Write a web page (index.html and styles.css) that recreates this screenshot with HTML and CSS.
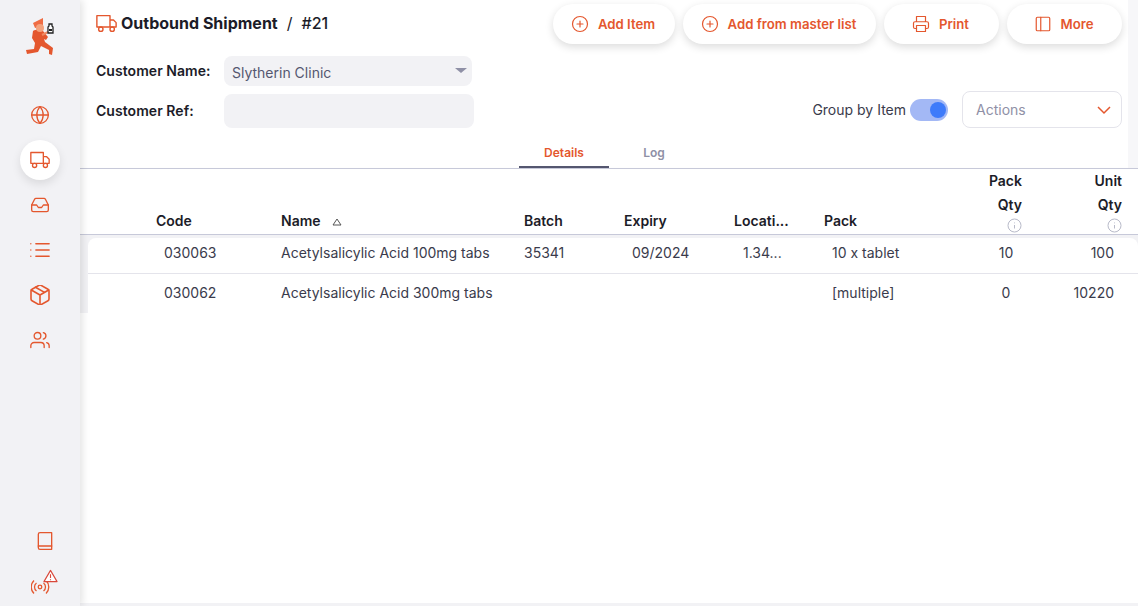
FILE: index.html
```html
<!DOCTYPE html>
<html lang="en">
<head>
    <meta charset="UTF-8">
    <meta name="viewport" content="width=device-width, initial-scale=1.0">
    <title>Outbound Shipment #21</title>
    <link rel="stylesheet" href="styles.css">
</head>
<body>
    <div class="app">
        <nav class="sidebar">
            <div class="logo">
                <svg width="30" height="40" viewBox="0 0 30 40">
                    <path d="M8 14c3-2 8-2 10 0l5 6-2 3-2-1 1 3 8 6-1 7-3-1 0-4-8-4-3 6-11 2-1-4 8-1 1-6-3-5z" fill="#e4572e"/>
                    <path d="M18 1L8 6l2 5 8-2z" fill="#ef6c43"/>
                    <circle cx="15" cy="11" r="4" fill="#f4a27c"/>
                    <path d="M17 18l6-3" stroke="#f08a63" stroke-width="2" fill="none"/>
                    <path d="M24 7h3v2l1 1v6h-5v-6l1-1z" fill="#fff" stroke="#222" stroke-width="1.300"/>
                    <path d="M24 12h3v2h-3z" fill="#222"/>
                </svg>
            </div>
            <a class="nav-item">
                <svg class="icon" viewBox="0 0 24 24"><circle cx="12" cy="12" r="10"/><path d="M2 12h20M12 2a15 15 0 0 1 0 20a15 15 0 0 1 0-20z"/></svg>
            </a>
            <a class="nav-item active">
                <svg class="icon" viewBox="0 0 24 24"><path d="M1 3h15v13H1zM16 8h4l3 3v5h-7z"/><circle cx="5.500" cy="18.500" r="2.500"/><circle cx="18.500" cy="18.500" r="2.500"/></svg>
            </a>
            <a class="nav-item">
                <svg class="icon" viewBox="0 0 24 24"><path d="M22 12h-6l-2 3h-4l-2-3H2"/><path d="M5.500 5.100L2 12v6a2 2 0 0 0 2 2h16a2 2 0 0 0 2-2v-6l-3.500-6.900A2 2 0 0 0 16.800 4H7.200a2 2 0 0 0-1.700 1.100z"/></svg>
            </a>
            <a class="nav-item">
                <svg class="icon" viewBox="0 0 24 24"><path d="M7 4.500h16M7 12h16M7 19.500h16M1 4.500h.01M1 12h.01M1 19.500h.01"/></svg>
            </a>
            <a class="nav-item">
                <svg class="icon" viewBox="2 2 20 20"><path d="M21 16V8a2 2 0 0 0-1-1.700l-7-4a2 2 0 0 0-2 0l-7 4A2 2 0 0 0 3 8v8a2 2 0 0 0 1 1.700l7 4a2 2 0 0 0 2 0l7-4a2 2 0 0 0 1-1.700z"/><path d="M3.300 7L12 12l8.700-5M12 22V12M7.500 4.200l9 5.200"/></svg>
            </a>
            <a class="nav-item">
                <svg class="icon" viewBox="0 0 24 24"><path d="M17 21v-2a4 4 0 0 0-4-4H5a4 4 0 0 0-4 4v2"/><circle cx="9" cy="7" r="4"/><path d="M23 21v-2a4 4 0 0 0-3-3.900M16 3.100a4 4 0 0 1 0 7.800"/></svg>
            </a>
            <div class="nav-bottom">
                <a class="nav-item book-item">
                    <svg class="icon" viewBox="0 0 24 24"><path d="M4 4a2 2 0 0 1 2-2h14v20H6a2 2 0 0 1-2-2z"/><path d="M4 18h16"/></svg>
                </a>
                <div class="signal">
                    <svg width="22" height="22" viewBox="0 0 22 22" class="icon-sm">
                        <circle cx="9" cy="15" r="1.800"/>
                        <path d="M5.500 11a5 5 0 0 0 0 8M12.500 11a5 5 0 0 1 0 8M3 8.500a9 9 0 0 0 0 13M15 8.500a9 9 0 0 1 0 13"/>
                    </svg>
                    <svg class="warn" width="15" height="14" viewBox="0 0 16 14">
                        <path d="M8 1L15 13H1z" fill="#fff" stroke="#d9483b" stroke-width="1.200" stroke-linejoin="round"/>
                        <path d="M8 5v4M8 10.500v1" stroke="#d9483b" stroke-width="1.200" fill="none"/>
                    </svg>
                </div>
            </div>
        </nav>

        <main class="content">
            <header class="top">
                <div class="top-row">
                    <div class="title">
                        <svg class="icon title-icon" viewBox="0 0 24 24"><path d="M1 3h15v13H1zM16 8h4l3 3v5h-7z"/><circle cx="5.500" cy="18.500" r="2.500"/><circle cx="18.500" cy="18.500" r="2.500"/></svg>
                        <b>Outbound Shipment</b><span class="title-sep">/</span><span class="title-num">#21</span>
                    </div>
                    <div class="buttons">
                        <button class="btn btn-item">
                            <svg class="icon btn-icon" viewBox="0 0 24 24"><circle cx="12" cy="12" r="10"/><path d="M12 8v8M8 12h8"/></svg>Add Item
                        </button>
                        <button class="btn btn-master">
                            <svg class="icon btn-icon" viewBox="0 0 24 24"><circle cx="12" cy="12" r="10"/><path d="M12 8v8M8 12h8"/></svg>Add from master list
                        </button>
                        <button class="btn btn-print">
                            <svg class="icon btn-icon" viewBox="0 0 24 24"><path d="M6 9V2h12v7M6 18H4a2 2 0 0 1-2-2v-5a2 2 0 0 1 2-2h16a2 2 0 0 1 2 2v5a2 2 0 0 1-2 2h-2"/><path d="M6 14h12v8H6z"/></svg>Print
                        </button>
                        <button class="btn btn-more">
                            <svg class="icon btn-icon" viewBox="0 0 24 24"><rect x="3" y="3" width="18" height="18" rx="1.500"/><path d="M9 3v18"/></svg>More
                        </button>
                    </div>
                </div>

                <div class="form-row name-row">
                    <label class="form-label">Customer Name:</label>
                    <div class="field field-name">
                        <span>Slytherin Clinic</span>
                        <i class="caret"></i>
                    </div>
                </div>
                <div class="form-row ref-row">
                    <label class="form-label">Customer Ref:</label>
                    <div class="field field-ref"></div>
                    <div class="ref-right">
                        <span class="group-label">Group by Item</span>
                        <span class="toggle"><i></i></span>
                        <div class="actions">
                            <span>Actions</span>
                            <svg width="16" height="10" viewBox="0 0 16 10"><path d="M2 2l6 6 6-6" fill="none" stroke="#e4572e" stroke-width="1.500"/></svg>
                        </div>
                    </div>
                </div>

                <div class="tabs">
                    <span class="tab tab-active">Details</span>
                    <span class="tab">Log</span>
                </div>
            </header>

            <div class="table-head">
                <div class="th col-code">Code</div>
                <div class="th col-name">Name <svg class="sort" width="10" height="8" viewBox="0 0 10 8"><path d="M5 1l4 6H1z" fill="none" stroke="#555" stroke-width="1"/></svg></div>
                <div class="th col-batch">Batch</div>
                <div class="th col-expiry">Expiry</div>
                <div class="th col-loc">Locati...</div>
                <div class="th col-pack">Pack</div>
                <div class="th col-num col-packqty">
                    <span>Pack</span><span>Qty</span>
                    <svg class="info" width="15" height="15" viewBox="0 0 15 15"><circle cx="7.500" cy="7.500" r="6.500"/><path d="M7.500 7v3.500M7.500 4.500v.8"/></svg>
                </div>
                <div class="th col-num col-unitqty">
                    <span>Unit</span><span>Qty</span>
                    <svg class="info" width="15" height="15" viewBox="0 0 15 15"><circle cx="7.500" cy="7.500" r="6.500"/><path d="M7.500 7v3.500M7.500 4.500v.8"/></svg>
                </div>
            </div>

            <div class="rows">
                <div class="row row-first">
                    <div class="td cell-code">030063</div>
                    <div class="td cell-name">Acetylsalicylic Acid 100mg tabs</div>
                    <div class="td cell-batch">35341</div>
                    <div class="td cell-expiry">09/2024</div>
                    <div class="td cell-loc">1.34...</div>
                    <div class="td cell-pack">10 x tablet</div>
                    <div class="td cell-packqty">10</div>
                    <div class="td cell-unitqty">100</div>
                </div>
                <div class="row">
                    <div class="td cell-code">030062</div>
                    <div class="td cell-name">Acetylsalicylic Acid 300mg tabs</div>
                    <div class="td cell-batch"></div>
                    <div class="td cell-expiry"></div>
                    <div class="td cell-loc"></div>
                    <div class="td cell-pack">[multiple]</div>
                    <div class="td cell-packqty">0</div>
                    <div class="td cell-unitqty">10220</div>
                </div>
            </div>
        </main>
    </div>
</body>
</html>
```

FILE: styles.css
```css
* {
    box-sizing: border-box;
}

body {
    margin: 0;
    font-family: Inter, "Liberation Sans", sans-serif;
    color: #1c1c28;
    background-color: #fff;
}

.app {
    display: flex;
    width: 1138px;
    height: 606px;
    overflow: hidden;
}

/* sidebar */
.sidebar {
    width: 80px;
    flex: none;
    background-color: #f2f2f5;
    display: flex;
    flex-direction: column;
    align-items: center;
    box-shadow: 2px 0 8px rgba(0, 0, 0, 0.12);
    z-index: 1;
    padding-top: 17px;
}

.logo {
    height: 40px;
    margin-bottom: 38px;
}

.nav-item {
    width: 40px;
    height: 40px;
    margin-bottom: 5px;
    border-radius: 50%;
    display: flex;
    align-items: center;
    justify-content: center;
}

.nav-item.active {
    background-color: #fff;
    box-shadow: 0 4px 10px rgba(0, 0, 0, 0.1);
}

.icon {
    width: 20px;
    height: 20px;
    fill: none;
    stroke: #e4572e;
    stroke-width: 1.6;
    stroke-linecap: round;
    stroke-linejoin: round;
}

.icon-sm {
    fill: none;
    stroke: #e4572e;
    stroke-width: 1.3;
}

.nav-bottom {
    margin-top: auto;
    padding-bottom: 10px;
    display: flex;
    flex-direction: column;
    align-items: center;
}

.book-item {
    margin-left: 10px;
}

.signal {
    position: relative;
    width: 24px;
    height: 24px;
    margin-top: 6px;
    margin-left: 6px;
}

.signal .warn {
    position: absolute;
    top: -3px;
    left: 12px;
}

/* header */
.content {
    flex: 1;
    min-width: 0;
    display: flex;
    flex-direction: column;
    background-color: #fff;
    border-bottom: 3px solid #f2f2f5;
}

.top {
    padding: 0 10px 0 16px;
    margin-right: 0;
    border-right: 10px solid #f7f7f9;
    width: 1058px;
}

.top-row {
    display: flex;
    justify-content: space-between;
    align-items: flex-start;
    height: 56px;
    padding-top: 4px;
}

.title {
    display: flex;
    align-items: center;
    font-size: 16px;
    height: 38px;
}

.title b {
    font-weight: 700;
}

.title-icon {
    width: 21px;
    height: 21px;
    margin-right: 4px;
}

.title-sep {
    margin: 0 9px;
}

.title-num {
    font-weight: 500;
}

.buttons {
    display: flex;
    gap: 8px;
    margin-right: -4px;
}

.btn {
    height: 40px;
    border: none;
    border-radius: 20px;
    background-color: #fff;
    box-shadow: 0 3px 8px rgba(0, 0, 0, 0.14);
    color: #e4572e;
    font-family: inherit;
    font-size: 13.2px;
    font-weight: 600;
    display: flex;
    align-items: center;
    justify-content: center;
    padding: 0 2px 0 0;
}

.btn-item {
    width: 122px;
}

.btn-master {
    width: 193px;
}

.btn-print {
    width: 115px;
}

.btn-more {
    width: 115px;
}

.btn-icon {
    width: 18px;
    height: 18px;
    margin-right: 9px;
}

.form-row {
    display: flex;
    align-items: center;
}

.name-row {
    height: 30px;
}

.ref-row {
    height: 34px;
    margin-top: 8px;
}

.form-label {
    width: 128px;
    padding-bottom: 2px;
    font-size: 14px;
    font-weight: 600;
    letter-spacing: 0.05px;
}

.field {
    background-color: #f2f2f5;
    border-radius: 8px;
    font-size: 14px;
    color: #555770;
}

.field-name {
    width: 248px;
    height: 30px;
    padding: 3px 5px 0 8px;
    display: flex;
    justify-content: space-between;
    align-items: center;
}

.field-ref {
    width: 250px;
    height: 34px;
}

.caret {
    width: 0;
    height: 0;
    border-left: 6px solid transparent;
    border-right: 6px solid transparent;
    border-top: 5px solid #8f90a6;
    margin-top: -4px;
}

.ref-right {
    margin-left: auto;
    margin-right: -4px;
    align-self: flex-end;
    display: flex;
    align-items: center;
}

.group-label {
    font-size: 14px;
    color: #3a3b4c;
}

.toggle {
    width: 38px;
    height: 22px;
    margin: 0 14px 0 4px;
    border-radius: 11px;
    background-color: #a3b8f5;
    display: flex;
    justify-content: flex-end;
    align-items: center;
    padding-right: 2px;
}

.toggle i {
    width: 16px;
    height: 16px;
    border-radius: 50%;
    background-color: #3e7bfa;
}

.actions {
    width: 160px;
    height: 37px;
    border: 1px solid #e4e4eb;
    border-radius: 8px;
    padding: 0 9px 0 13px;
    display: flex;
    justify-content: space-between;
    align-items: center;
    font-size: 14px;
    color: #8f90a6;
}

.tabs {
    display: flex;
    justify-content: center;
    margin-top: 9px;
    height: 31px;
    padding-left: 4px;
}

.tab {
    width: 90px;
    height: 31px;
    font-size: 12px;
    font-weight: 600;
    color: #8f90a6;
    text-align: center;
    line-height: 32px;
}

.tab-active {
    color: #e4572e;
    border-bottom: 2px solid #555770;
}

/* table */
.table-head {
    height: 67px;
    flex: none;
    border-top: 1px solid #c7c9d9;
    border-bottom: 1px solid #c7c9d9;
    box-shadow: 0 1px 2px rgba(0, 0, 0, 0.06);
    display: grid;
    grid-template-columns: 201px 243px 100px 110px 90px 112px 92px 100px;
    font-size: 14px;
    font-weight: 600;
    color: #1c1c28;
}

.th {
    display: flex;
    align-items: flex-end;
    padding-bottom: 5px;
}

.col-code {
    padding-left: 76px;
}

.sort {
    margin-left: 11px;
    margin-bottom: 3px;
}

.col-num {
    flex-direction: column;
    align-items: flex-end;
    justify-content: flex-start;
    padding: 0 6px 0 0;
    line-height: 24px;
}

.info {
    fill: none;
    stroke: #b8bac9;
    stroke-width: 1;
    margin-top: 1px;
}

.rows {
    background-color: #f2f2f5;
    padding: 3px 0 0 8px;
}

.row {
    height: 39px;
    padding-bottom: 2px;
    background-color: #fff;
    display: grid;
    grid-template-columns: 193px 243px 100px 110px 90px 112px 92px 100px;
    align-items: center;
    font-size: 14px;
    color: #3a3b4c;
}

.row-first {
    height: 36px;
    padding-bottom: 6px;
    border-bottom: 1px solid #e4e4eb;
    border-top-left-radius: 8px;
    border-top-right-radius: 8px;
}

.cell-code {
    padding-left: 76px;
}

.cell-expiry {
    padding-left: 8px;
}

.cell-loc {
    padding-left: 9px;
}

.cell-pack {
    padding-left: 8px;
}

.cell-packqty {
    text-align: center;
    padding-left: 48px;
}

.cell-unitqty {
    text-align: right;
    padding-right: 14px;
}
```
